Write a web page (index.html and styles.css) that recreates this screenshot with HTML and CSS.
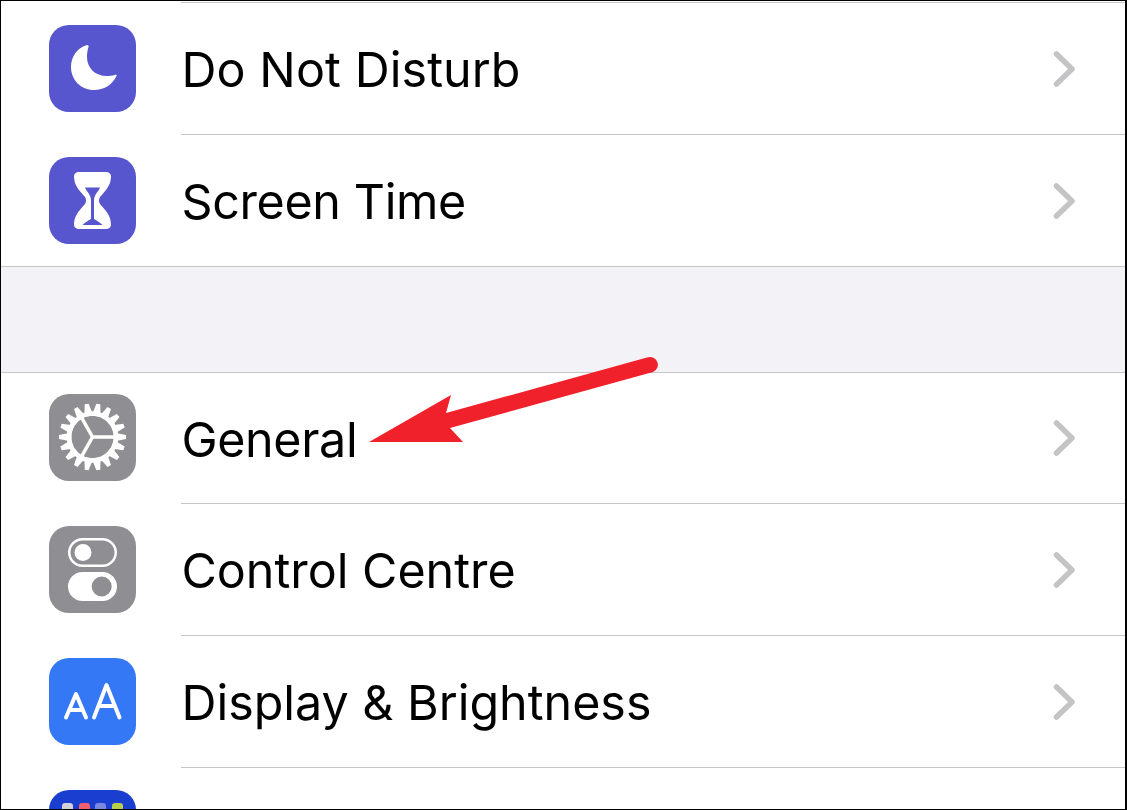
FILE: index.html
```html
<!DOCTYPE html>
<html lang="en">
<head>
<meta charset="utf-8">
<title>Settings</title>
<link rel="stylesheet" href="styles.css">
</head>
<body>
<main class="screen">
  <section class="group group-first">
    <div class="row">
      <span class="icon icon-indigo">
        <svg viewBox="0 0 87 87"><path class="fill" d="M38 20C27 23 22 33 22 42C22 55 32 65 45 65C55 65 63 60 67.500 51C68 50 67 49.500 66 50C63 50.800 61 51 58 51C46 51 38 43 38 32C38 28 38.500 25 39.500 22C40 20.500 39 19.800 38 20z"/></svg>
      </span>
      <div class="body"><span class="label label-wide">Do Not Disturb</span><svg class="chev" viewBox="0 0 24 40"><path d="M5.500 5L21 20L5.500 35"/></svg></div>
    </div>
    <div class="row row-short">
      <span class="icon icon-indigo">
        <svg viewBox="0 0 87 87"><path class="fill" d="M30 15H57c3 0 5 1.700 5 4c0 7-3 12-7.500 17c-3 3.300-4.500 4.500-4.500 7.500s1.500 4.200 4.500 7.500c4.500 5 7.500 10 7.500 17c0 2.300-2 4-5 4H30c-3 0-5-1.700-5-4c0-7 3-12 7.500-17c3-3.300 4.500-4.500 4.500-7.500s-1.500-4.200-4.500-7.500c-4.500-5-7.500-10-7.500-17c0-2.300 2-4 5-4z"/><path class="cut" d="M36 30.500H51c-.5 1.500-1.500 3-3 5c-1.500 2-3 4.500-3 8V62c3 1.500 6 3.500 8.500 6H33.500c2.500-2.500 5.500-4.500 8.500-6V43.500c0-3.500-1.500-6-3-8c-1.500-2-2.500-3.500-3-5z"/></svg>
      </span>
      <div class="body body-last"><span class="label label-tight">Screen Time</span><svg class="chev" viewBox="0 0 24 40"><path d="M5.500 5L21 20L5.500 35"/></svg></div>
    </div>
  </section>
  <div class="gap"></div>
  <section class="group">
    <div class="row row-short row-top">
      <span class="icon icon-gray">
        <svg viewBox="0 0 87 87">
          <defs><path id="tooth" d="M39 22L41.500 9.500H45.500L48 22z"/></defs>
          <g class="fill">
            <use href="#tooth" transform="rotate(10 43.500 43)"/>
            <use href="#tooth" transform="rotate(30 43.500 43)"/>
            <use href="#tooth" transform="rotate(50 43.500 43)"/>
            <use href="#tooth" transform="rotate(70 43.500 43)"/>
            <use href="#tooth" transform="rotate(90 43.500 43)"/>
            <use href="#tooth" transform="rotate(110 43.500 43)"/>
            <use href="#tooth" transform="rotate(130 43.500 43)"/>
            <use href="#tooth" transform="rotate(150 43.500 43)"/>
            <use href="#tooth" transform="rotate(170 43.500 43)"/>
            <use href="#tooth" transform="rotate(190 43.500 43)"/>
            <use href="#tooth" transform="rotate(210 43.500 43)"/>
            <use href="#tooth" transform="rotate(230 43.500 43)"/>
            <use href="#tooth" transform="rotate(250 43.500 43)"/>
            <use href="#tooth" transform="rotate(270 43.500 43)"/>
            <use href="#tooth" transform="rotate(290 43.500 43)"/>
            <use href="#tooth" transform="rotate(310 43.500 43)"/>
            <use href="#tooth" transform="rotate(330 43.500 43)"/>
            <use href="#tooth" transform="rotate(350 43.500 43)"/>
          </g>
          <circle class="ring" cx="43.500" cy="43" r="23.500"/>
          <path class="spokes" d="M43.500 43H66M43.500 43L32.200 22.800M43.500 43L32.200 63.200"/>
        </svg>
      </span>
      <div class="body"><span class="label label-tight">General</span><svg class="chev" viewBox="0 0 24 40"><path d="M5.500 5L21 20L5.500 35"/></svg></div>
    </div>
    <div class="row">
      <span class="icon icon-gray">
        <svg viewBox="0 0 87 87">
          <rect class="outline" x="20.250" y="13.250" width="46.500" height="26.500" rx="13.250"/>
          <circle class="fill" cx="34" cy="26.500" r="8.500"/>
          <rect class="fill" x="19" y="46" width="49" height="29" rx="14.500"/>
          <circle class="gray-dot" cx="52.700" cy="60.500" r="10"/>
        </svg>
      </span>
      <div class="body"><span class="label">Control Centre</span><svg class="chev" viewBox="0 0 24 40"><path d="M5.500 5L21 20L5.500 35"/></svg></div>
    </div>
    <div class="row">
      <span class="icon icon-blue">
        <svg viewBox="0 0 87 87"><path class="glyph" d="M17 59.500L27 36L37 59.500M20.500 52H33.500M45 59.500L57.500 27L70.500 59.500M49.500 48H66"/></svg>
      </span>
      <div class="body"><span class="label">Display &amp; Brightness</span><svg class="chev" viewBox="0 0 24 40"><path d="M5.500 5L21 20L5.500 35"/></svg></div>
    </div>
    <div class="row">
      <span class="icon icon-home">
        <span class="dots"><i class="dot dot-a"></i><i class="dot dot-b"></i><i class="dot dot-c"></i><i class="dot dot-d"></i></span>
      </span>
      <div class="body"></div>
    </div>
  </section>
  <svg class="arrow" viewBox="0 0 1127 810"><path class="arrow-head" d="M369 442L451 395L446 413L647 357.500a7.500 7.500 0 0 1 6 14.500L450 428L463 442z"/></svg>
</main>
</body>
</html>
```
FILE: styles.css
```css
* { box-sizing: border-box; }
html, body { margin: 0; height: 100%; }
body { background: #fff; overflow: hidden; }
.screen {
  position: relative;
  width: 1127px;
  height: 810px;
  overflow: hidden;
  background: #fff;
  border-style: solid;
  border-color: #000;
  border-width: 1px 2px 1px 1px;
  font-family: "Inter", "Liberation Sans", sans-serif;
}
.group-first { padding-top: 2px; }
.group-first .row:first-child .body { box-shadow: 0 -1px 0 #c6c6c8; }
.row { display: flex; height: 132px; align-items: flex-start; padding-left: 48px; }
.row-short { height: 131px; }
.icon { display: block; flex: none; width: 87px; height: 87px; margin-top: 22px; border-radius: 20px; overflow: hidden; }
.row-top .icon { margin-top: 21px; }
.icon svg { display: block; width: 87px; height: 87px; }
.icon-indigo { background: #5856cf; }
.icon-gray { background: #8e8e93; }
.icon-blue { background: #3478f6; }
.icon-home { background: #1a3fd0; padding: 13px 13px 0; }
.dots { display: flex; gap: 5.500px; }
.dot { width: 11px; height: 20px; border-radius: 3px; }
.dot-a { background: #d1d1d6; }
.dot-b { background: #f2606e; }
.dot-c { background: #7a88e0; }
.dot-d { background: #b5d04a; }
.body {
  flex: 1;
  align-self: stretch;
  margin-left: 45px;
  padding-right: 50px;
  display: flex;
  align-items: center;
  justify-content: space-between;
  border-bottom: 1px solid #c6c6c8;
}
.body-last { border-bottom: 0; }
.label { padding: 2px 0 0 0.500px; font-size: 48.400px; color: #000; font-weight: 400; white-space: nowrap; }
.label-tight { letter-spacing: -0.350px; }
.label-wide { letter-spacing: 0.100px; }
.chev { width: 24px; height: 40px; flex: none; }
.chev path { fill: none; stroke: #c4c4c7; stroke-width: 5.500px; stroke-linecap: round; stroke-linejoin: round; }
.gap { height: 107px; background: #f2f2f7; border-top: 1px solid #c6c6c8; border-bottom: 1px solid #c6c6c8; }
.fill { fill: #fff; }
.cut { fill: #5856cf; }
.ring { fill: none; stroke: #fff; stroke-width: 4.500px; }
.spokes { fill: none; stroke: #fff; stroke-width: 3.500px; }
.outline { fill: none; stroke: #fff; stroke-width: 2.500px; }
.gray-dot { fill: #8e8e93; }
.glyph { fill: none; stroke: #fff; stroke-width: 4px; stroke-linecap: round; stroke-linejoin: round; }
.arrow { position: absolute; left: -1px; top: -1px; width: 1127px; height: 810px; }
.arrow-head { fill: #f0212b; }
```
